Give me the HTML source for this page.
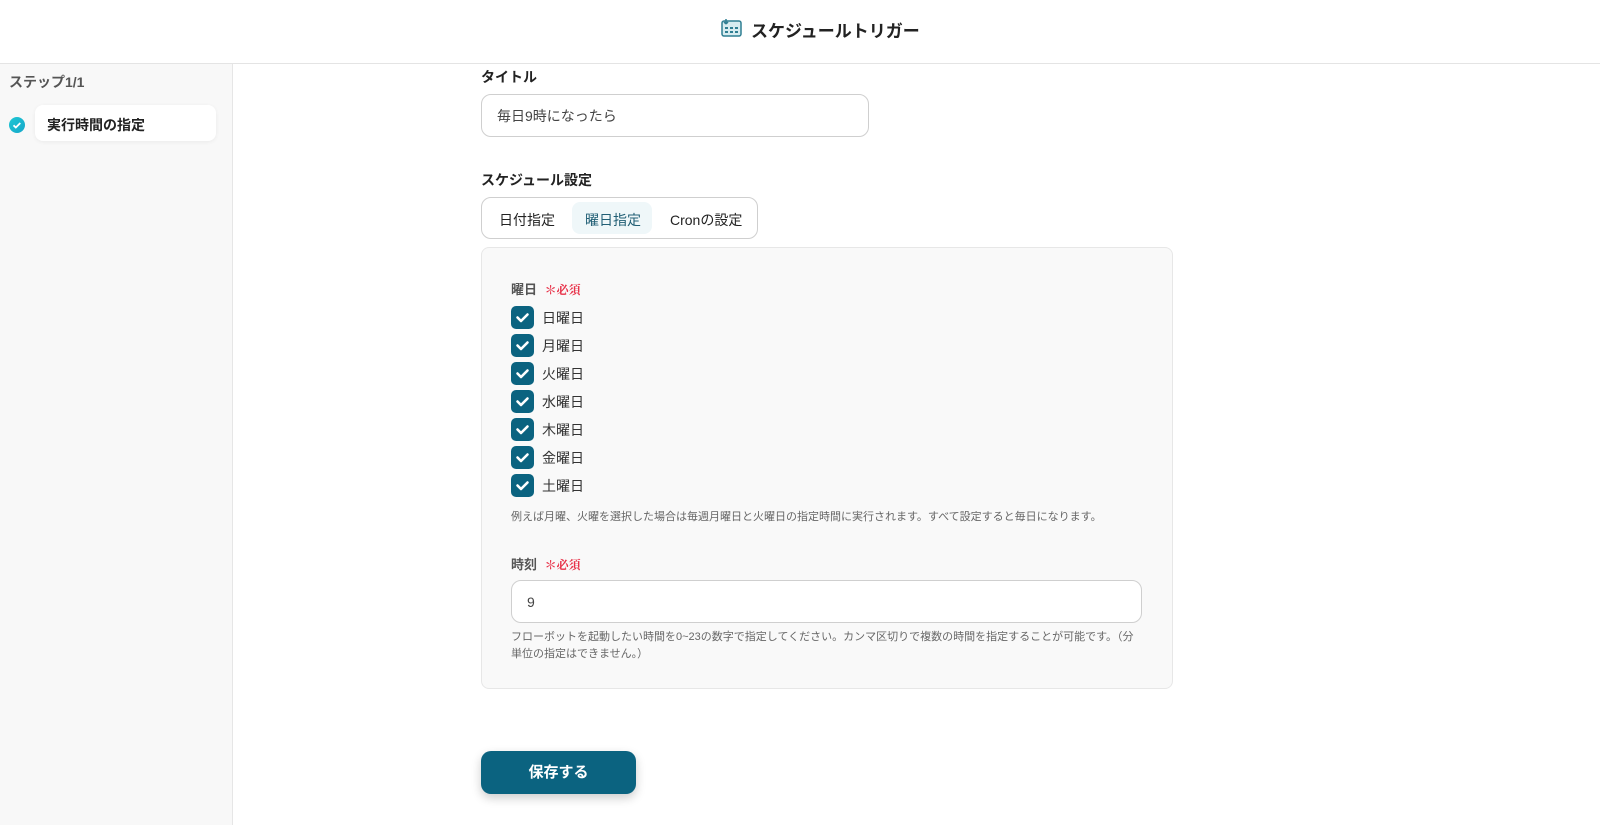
<!DOCTYPE html>
<html><head><meta charset="utf-8"><style>
*{box-sizing:border-box;margin:0;padding:0}
body{width:1600px;height:825px;overflow:hidden;background:#fff;font-family:"Liberation Sans","Noto Sans CJK JP",sans-serif;color:#222;position:relative}
.hdr{position:absolute;left:0;top:0;width:1600px;height:64px;border-bottom:1px solid #e4e4e4;background:#fff}
.hdr .t{position:absolute;left:751px;top:17px;font-size:17px;font-weight:bold;color:#222}
.side{position:absolute;left:0;top:64px;width:233px;height:761px;background:#f8f8f8;border-right:1px solid #e6e6e6}
.abs{position:absolute}
.lbl{font-size:14px;font-weight:bold;color:#222}
.inp{position:absolute;border:1px solid #cfcfcf;border-radius:10px;background:#fff;font-size:14px;color:#444;padding-left:15px;display:flex;align-items:center}
.cb{position:absolute;left:511px;width:23px;height:23px;border-radius:5px;background:#0b6380}
.cbt{position:absolute;left:542px;font-size:14px;color:#333}
.req{color:#e8334a;font-size:12px;font-weight:bold;font-family:"Liberation Serif","Noto Serif CJK SC",serif}
.note{font-size:11px;color:#666}
</style></head><body>
<div class="hdr">
<svg class="abs" style="left:721px;top:18px" width="21" height="20" viewBox="0 0 21 20"><rect x="1" y="3" width="19" height="15" rx="2" fill="#d7ecf0" stroke="#2f7e92" stroke-width="1.5"/><path d="M5 1v5M5 6l-2-2M5 6l2-2" stroke="#2f7e92" stroke-width="1.5" fill="none"/><g fill="#2f7e92"><rect x="4" y="9" width="3" height="2"/><rect x="9" y="9" width="3" height="2"/><rect x="14" y="9" width="3" height="2"/><rect x="4" y="13" width="3" height="2"/><rect x="9" y="13" width="3" height="2"/><rect x="14" y="13" width="3" height="2"/></g></svg>
<div class="t">スケジュールトリガー</div></div>
<div class="side">
<div class="abs" style="left:9px;top:8px;font-size:14px;font-weight:bold;color:#555">ステップ1/1</div>
<div class="abs" style="left:9px;top:53px;width:16px;height:16px;border-radius:50%;background:linear-gradient(135deg,#1fc7d4,#16a7c9)"><svg width="16" height="16"><path d="M4.5 8.3l2.3 2.2 4.5-4.5" stroke="#fff" stroke-width="1.8" fill="none"/></svg></div>
<div class="abs" style="left:35px;top:41px;width:181px;height:36px;background:#fff;border-radius:8px;box-shadow:0 1px 4px rgba(0,0,0,.06);font-size:14px;font-weight:bold;padding:10px 0 0 12px">実行時間の指定</div>
</div>
<div class="abs lbl" style="left:481px;top:67px">タイトル</div>
<div class="inp" style="left:481px;top:94px;width:388px;height:43px">毎日9時になったら</div>
<div class="abs lbl" style="left:481px;top:170px">スケジュール設定</div>
<div class="abs" style="left:481px;top:197px;width:277px;height:42px;border:1px solid #cfcfcf;border-radius:10px;background:#fff"></div>
<div class="abs" style="left:572px;top:202px;width:80px;height:32px;background:#eff7f9;border-radius:8px"></div>
<div class="abs" style="left:499px;top:210px;font-size:14px">日付指定</div>
<div class="abs" style="left:585px;top:210px;font-size:14px;color:#215f75">曜日指定</div>
<div class="abs" style="left:670px;top:210px;font-size:14px">Cronの設定</div>
<div class="abs" style="left:481px;top:247px;width:692px;height:442px;background:#f9f9f9;border:1px solid #e7e7e7;border-radius:8px"></div>
<div class="abs" style="left:511px;top:279px;font-size:13px;font-weight:bold;color:#555">曜日 <span class="req" style="margin-left:4px">＊必須</span></div>
<div class="cb" style="top:306px"></div><div class="cbt" style="top:308px">日曜日</div>
<div class="cb" style="top:334px"></div><div class="cbt" style="top:336px">月曜日</div>
<div class="cb" style="top:362px"></div><div class="cbt" style="top:364px">火曜日</div>
<div class="cb" style="top:390px"></div><div class="cbt" style="top:392px">水曜日</div>
<div class="cb" style="top:418px"></div><div class="cbt" style="top:420px">木曜日</div>
<div class="cb" style="top:446px"></div><div class="cbt" style="top:448px">金曜日</div>
<div class="cb" style="top:474px"></div><div class="cbt" style="top:476px">土曜日</div>
<svg class="abs" style="left:511px;top:306px" width="23" height="196"><g stroke="#fff" stroke-width="2.6" fill="none" stroke-linecap="round" stroke-linejoin="round"><path d="M6.5 11.5l3.5 3.5 6.5-6.5"/><path d="M6.5 39.5l3.5 3.5 6.5-6.5"/><path d="M6.5 67.5l3.5 3.5 6.5-6.5"/><path d="M6.5 95.5l3.5 3.5 6.5-6.5"/><path d="M6.5 123.5l3.5 3.5 6.5-6.5"/><path d="M6.5 151.5l3.5 3.5 6.5-6.5"/><path d="M6.5 179.5l3.5 3.5 6.5-6.5"/></g></svg>
<div class="abs note" style="left:511px;top:508px">例えば月曜、火曜を選択した場合は毎週月曜日と火曜日の指定時間に実行されます。すべて設定すると毎日になります。</div>
<div class="abs" style="left:511px;top:554px;font-size:13px;font-weight:bold;color:#555">時刻 <span class="req" style="margin-left:4px">＊必須</span></div>
<div class="inp" style="left:511px;top:580px;width:631px;height:43px">9</div>
<div class="abs note" style="left:511px;top:629px;line-height:17px">フローボットを起動したい時間を0~23の数字で指定してください。カンマ区切りで複数の時間を指定することが可能です。（分<br>単位の指定はできません。）</div>
<div class="abs" style="left:481px;top:751px;width:155px;height:43px;background:#0b6380;border-radius:10px;box-shadow:0 4px 10px rgba(0,0,0,.2);color:#fff;font-size:15px;font-weight:bold;text-align:center;line-height:43px">保存する</div>
</body></html>
